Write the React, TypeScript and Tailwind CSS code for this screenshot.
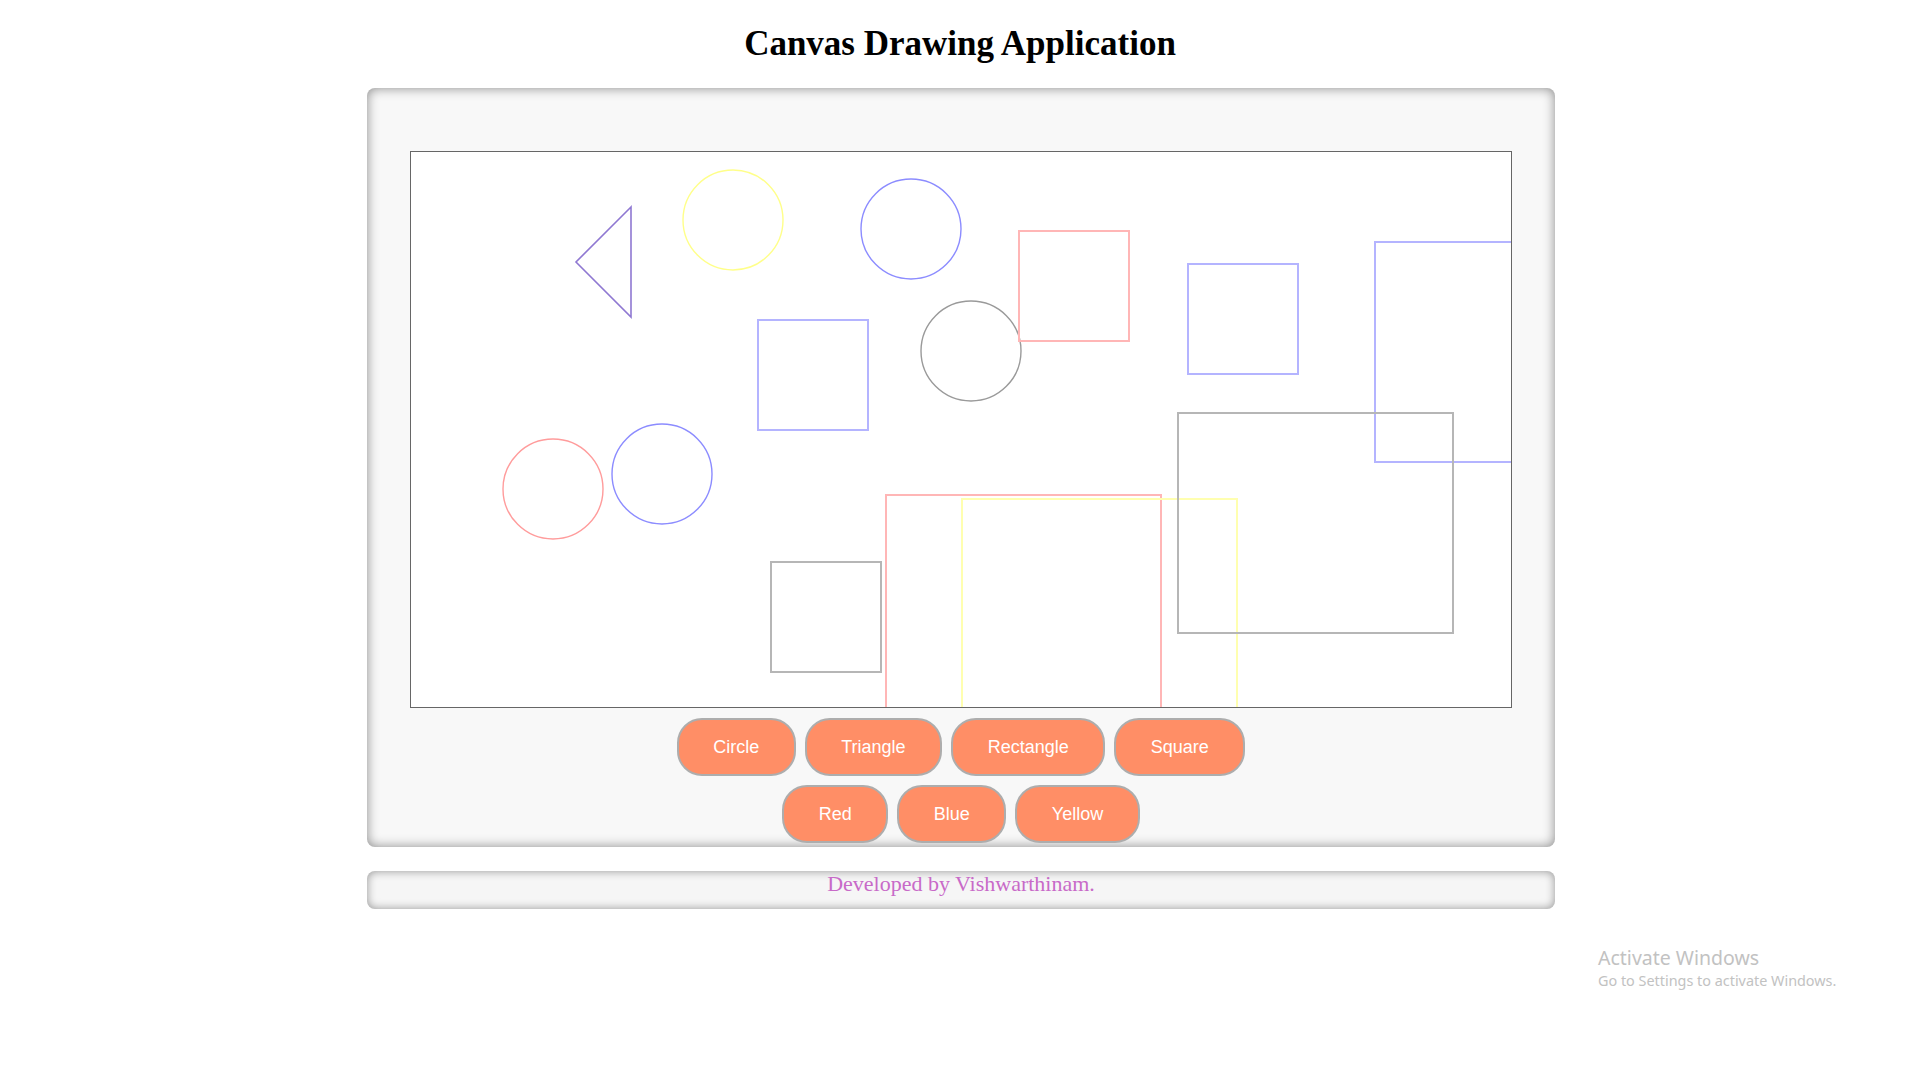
import React from "react";

// shapes already drawn on the board (coords relative to the canvas)
type Shape =
  | { kind: "circle"; x: number; y: number; r: number; color: string }
  | { kind: "rect"; x: number; y: number; w: number; h: number; color: string }
  | { kind: "tri"; points: string; color: string };

const shapes: Shape[] = [
  { kind: "tri", points: "220,55 165,110 220,165", color: "#8f78d2" },
  { kind: "circle", x: 322, y: 68, r: 50, color: "#ffff8a" },
  { kind: "circle", x: 500, y: 77, r: 50, color: "#8c8cff" },
  { kind: "rect", x: 347, y: 168, w: 110, h: 110, color: "#b4b4ff" },
  { kind: "circle", x: 560, y: 199, r: 50, color: "#9a9a9a" },
  { kind: "rect", x: 608, y: 79, w: 110, h: 110, color: "#ffb6b6" },
  { kind: "rect", x: 777, y: 112, w: 110, h: 110, color: "#b4b4ff" },
  { kind: "circle", x: 142, y: 337, r: 50, color: "#ff9c9c" },
  { kind: "circle", x: 251, y: 322, r: 50, color: "#8c8cff" },
  { kind: "rect", x: 360, y: 410, w: 110, h: 110, color: "#b6b6b6" },
  { kind: "rect", x: 475, y: 343, w: 275, h: 220, color: "#ffb6b6" },
  { kind: "rect", x: 551, y: 347, w: 275, h: 220, color: "#ffffb0" },
  { kind: "rect", x: 964, y: 90, w: 275, h: 220, color: "#b4b4ff" },
  { kind: "rect", x: 767, y: 261, w: 275, h: 220, color: "#b6b6b6" },
];

const shapeButtons = ["Circle", "Triangle", "Rectangle", "Square"];
const colorButtons = ["Red", "Blue", "Yellow"];

function Btn(props: { label: string }) {
  return (
    <button className="h-[58px] px-[34.5px] rounded-[25px] border-2 border-[#adadad] bg-[#ff8e66] text-white text-[18px] font-['Liberation_Sans',Arial,sans-serif] leading-none">
      {props.label}
    </button>
  );
}

export default function App() {
  return (
    <div className="relative min-h-[1080px] bg-white font-['Liberation_Serif','Times_New_Roman',serif]">
      <h1 className="pt-[24px] text-center text-[35px] leading-[39px] font-bold text-black">
        Canvas Drawing Application
      </h1>

      <div className="ml-[367px] mt-[25px] w-[1188px] rounded-lg bg-[#f8f8f8] px-[43px] pt-[63px] pb-[4px] shadow-[inset_0_0_12px_rgba(0,0,0,0.45)]">
        <div className="h-[557px] w-[1102px] border border-[#666] bg-white overflow-hidden">
          <svg width="1100" height="555" viewBox="0 0 1100 555">
            {shapes.map((s, i) => {
              if (s.kind === "circle")
                return <circle key={i} cx={s.x} cy={s.y} r={s.r} fill="none" stroke={s.color} strokeWidth={1.4} />;
              if (s.kind === "rect")
                return <rect key={i} x={s.x} y={s.y} width={s.w} height={s.h} fill="none" stroke={s.color} strokeWidth={2} />;
              return <polygon key={i} points={s.points} fill="none" stroke={s.color} strokeWidth={1.6} />;
            })}
          </svg>
        </div>

        <div className="mt-[10px] flex justify-center gap-[9px]">
          {shapeButtons.map((b) => (
            <Btn key={b} label={b} />
          ))}
        </div>
        <div className="mt-[9px] flex justify-center gap-[9px]">
          {colorButtons.map((b) => (
            <Btn key={b} label={b} />
          ))}
        </div>
      </div>

      <div className="ml-[367px] mt-[24px] h-[38px] w-[1188px] rounded-lg bg-[#f6f6f6] text-center shadow-[inset_0_0_10px_rgba(0,0,0,0.4)]">
        <p className="text-[22px] leading-[25px] text-[#c86ac8]">Developed by Vishwarthinam.</p>
      </div>

      {/* windows watermark */}
      <div className="absolute left-[1598px] top-[945px] font-['Noto_Sans','Open_Sans',sans-serif] text-[#c2c2c2]">
        <div className="text-[19.5px] leading-[26px]">Activate Windows</div>
        <div className="text-[14.4px] leading-[20px]">Go to Settings to activate Windows.</div>
      </div>
    </div>
  );
}
